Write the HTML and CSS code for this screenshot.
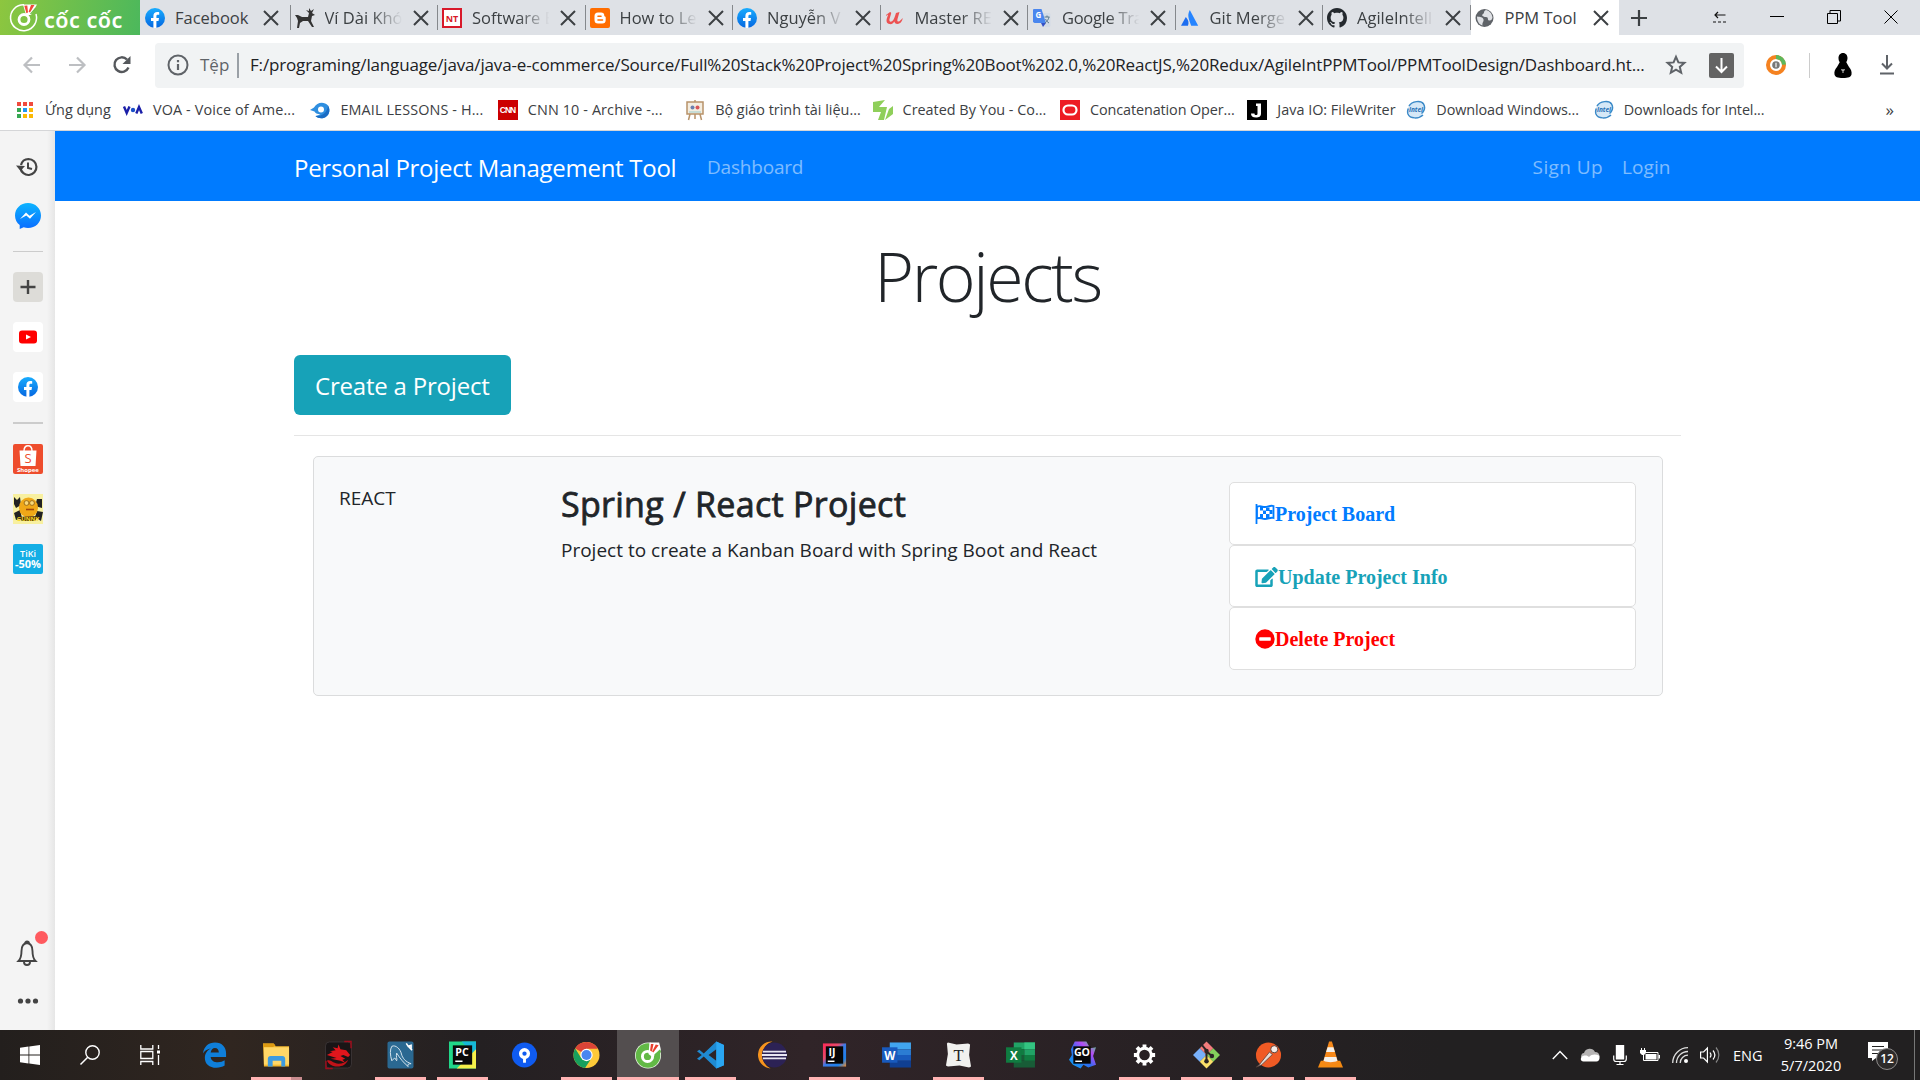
FILE: index.html
```html
<!DOCTYPE html>
<html lang="vi">
<head>
<meta charset="utf-8">
<title>PPM Tool</title>
<link rel="stylesheet" href="styles.css">
</head>
<body>
<svg class="defs" width="0" height="0">
  <defs>
    <linearGradient id="blue" x1="0" y1="0" x2="0" y2="1"><stop offset="0" stop-color="#18acfe"/><stop offset="1" stop-color="#0566e0"/></linearGradient>
    <linearGradient id="msg" x1="0" y1="0" x2="0" y2="1"><stop offset="0" stop-color="#0cb4ff"/><stop offset="1" stop-color="#0a6cff"/></linearGradient>
    <linearGradient id="ij" x1="0" y1="0" x2="1" y2="1"><stop offset="0" stop-color="#fe2857"/><stop offset=".35" stop-color="#ea4a6a"/><stop offset=".5" stop-color="#3a7be8"/><stop offset=".8" stop-color="#1c80ea"/><stop offset="1" stop-color="#f08a2a"/></linearGradient>
    <linearGradient id="go" x1="0" y1="1" x2="1" y2="0"><stop offset="0" stop-color="#0aa8f5"/><stop offset=".45" stop-color="#2e6cf0"/><stop offset=".7" stop-color="#b74af7"/><stop offset="1" stop-color="#3bea62"/></linearGradient>
    <symbol id="x" viewBox="0 0 16 16"><path d="M1 1l14 14M15 1L1 15" stroke="#3c4043" stroke-width="2" fill="none"/></symbol>
    <symbol id="fb" viewBox="0 0 20 20"><circle cx="10" cy="10" r="10" fill="url(#blue)"/><path d="M8.4 20v-7H6v-3h2.4V8c0-2.700 1.500-4 3.800-4 .9 0 1.700.1 2 .2v2.500h-1.400c-1.100 0-1.400.6-1.400 1.400V10H14l-.5 3h-2.100v7z" fill="#fff"/></symbol>
    <symbol id="intel" viewBox="0 0 20 20"><ellipse cx="10" cy="9.500" rx="8.300" ry="8" fill="#d5e8f7"/><path d="M3 6C6 1 15 0 17.500 4s0 8-2 9.500M17 15c-4 4-13 4-15-1-.7-2-.3-4 .3-5.500" fill="none" stroke="#3c8ac8" stroke-width="1.500"/><text x="10" y="12" text-anchor="middle" class="g-intel">intel</text></symbol>
  </defs>
</svg>

<header class="tabs">
  <div class="brand">
    <svg width="36" height="35" viewBox="0 0 36 35"><path d="M18 4.700A13 13 0 1030 14" fill="none" stroke="#fff" stroke-width="1.500"/><path d="M17 4.500h14l-6 10.500h-5z" fill="#fff"/><path d="M18.300 5.700l3-.2.700 7-1.600.8zM25 5l3.500 0-4.500 7.500-1.400-.8z" fill="#f04a3a"/><path d="M30.500 8l-5.500 6.500-1-.8 5-5.700z" fill="#6cbd45"/><circle cx="18" cy="19.500" r="5" fill="none" stroke="#fff" stroke-width="2.800"/></svg>
    <span class="brand-name">cốc cốc</span>
  </div>
  <nav class="tablist">
    <div class="tab"><svg class="ic"><use href="#fb"/></svg><span class="title">Facebook</span><svg class="x"><use href="#x"/></svg></div>
    <div class="tab"><svg class="ic" viewBox="0 0 20 20"><path d="M0 7h3l4 2h6l1-4-3-3 3 1V0l2 3 3-2-2 4 3 2-3 1-1 5 3 6h-2l-4-6H8l-3 2-1 5H2l1-7-1-3z" fill="#333"/></svg><span class="title">Ví Dài Khó</span><svg class="x"><use href="#x"/></svg></div>
    <div class="tab"><svg class="ic" viewBox="0 0 20 20"><path d="M1 1h18v18H1z" fill="#fff" stroke="#d8192a" stroke-width="2"/><text x="10" y="13.500" text-anchor="middle" class="g-nt">NT</text></svg><span class="title">Software E</span><svg class="x"><use href="#x"/></svg></div>
    <div class="tab"><svg class="ic" viewBox="0 0 20 20"><rect width="20" height="20" rx="2" fill="#ff6d00"/><path d="M8 4.500h3a3.300 3.300 0 013.300 3.300c0 1 1.400.6 1.400 1.700v2.500A3.500 3.500 0 0112.200 15.500H8A3.500 3.500 0 014.500 12V8A3.500 3.500 0 018 4.500z" fill="#fff"/><path d="M8 8.200h3M8 12h4.500" stroke="#ff6d00" stroke-width="1.600" stroke-linecap="round"/></svg><span class="title">How to Le</span><svg class="x"><use href="#x"/></svg></div>
    <div class="tab"><svg class="ic"><use href="#fb"/></svg><span class="title">Nguyễn V</span><svg class="x"><use href="#x"/></svg></div>
    <div class="tab"><svg class="ic" viewBox="0 0 20 20"><path d="M1 7l4-3c1 0 1.500 1 1 2L4.500 11c-.5 2 .5 3 2 2.500C9 12.500 10 8 11 5l3.500-1-2 7c-.5 2 0 2.500 1 2.500s3-2 4-3.500c.5 2-2 6-5 6-2 0-3-1-3-2.500-1.500 2-3 3-5 2.500C1.500 15.500 1 13 2 10l1-3c-.5-.5-1 .5-1.500 1z" fill="#ec5252"/></svg><span class="title">Master RE</span><svg class="x"><use href="#x"/></svg></div>
    <div class="tab"><svg class="ic" viewBox="0 0 20 20"><path d="M8 5h9.500l1 1v12l-1 1H13z" fill="#d3dbe6"/><path d="M1.500 1h8l4.500 14H2.500L1 14V1.500z" fill="#4a86ee"/><path d="M9 15h5l-3 4z" fill="#3551c5"/><text x="6.500" y="10" text-anchor="middle" class="g-g">G</text><path d="M12.500 9h5M15 7.500V9M13 15c2-1.500 3.500-3.500 4-6M13.500 11c1 2 2 3 3.500 4" stroke="#5b7a8e" fill="none"/></svg><span class="title snug">Google Tra</span><svg class="x"><use href="#x"/></svg></div>
    <div class="tab"><svg class="ic" viewBox="0 0 20 20"><path d="M5.800 9c2.800 3 3.200 5.500 2.200 8.800H1z" fill="#1d6df0"/><path d="M9.800 2l8.400 15.800h-7C9.500 12 6.500 8 9.800 2z" fill="#2684ff"/></svg><span class="title">Git Merge</span><svg class="x"><use href="#x"/></svg></div>
    <div class="tab"><svg class="ic" viewBox="0 0 16 16"><path fill="#24292e" d="M8 0C3.580 0 0 3.580 0 8c0 3.540 2.290 6.530 5.470 7.590.4.070.55-.17.55-.38 0-.19-.01-.82-.01-1.490-2.010.37-2.530-.49-2.690-.94-.09-.23-.48-.94-.82-1.130-.28-.15-.68-.52-.01-.53.63-.01 1.080.58 1.230.82.72 1.210 1.870.87 2.330.66.07-.52.28-.87.51-1.070-1.780-.2-3.640-.89-3.640-3.950 0-.87.31-1.590.82-2.150-.08-.2-.36-1.020.08-2.120 0 0 .67-.21 2.200.82.64-.18 1.320-.27 2-.27s1.360.09 2 .27c1.530-1.040 2.200-.82 2.200-.82.44 1.100.16 1.920.08 2.120.51.56.82 1.270.82 2.150 0 3.070-1.870 3.750-3.650 3.950.29.25.54.73.54 1.480 0 1.070-.01 1.930-.01 2.200 0 .21.15.46.55.38A8.010 8.010 0 0016 8c0-4.420-3.580-8-8-8z"/></svg><span class="title">AgileIntell</span><svg class="x"><use href="#x"/></svg></div>
    <div class="tab active"><svg class="ic" viewBox="0 0 20 20"><circle cx="9.500" cy="10" r="9" fill="#5f6368"/><path d="M2 8.500c3 .5 6 .5 6.500 3C9 14 7 14 7.500 17.500 4 16.500 2 13 2 8.500zM11 2c-3 1-1 3-3 4s0 3 3 3 1 3 3 3.500 3-1 3.500-3C17 6 15 3 11 2z" fill="#dfe1e5"/></svg><span class="title">PPM Tool</span><svg class="x"><use href="#x"/></svg></div>
  </nav>
  <svg class="newtab" width="16" height="16" viewBox="0 0 16 16"><path d="M8 0v16M0 8h16" stroke="#3c4043" stroke-width="2.200"/></svg>
  <div class="winctl">
    <svg width="14" height="14" viewBox="0 0 14 14"><path d="M1.500 5h11M5 2L2 5l3 3M0 12h3M5 12h3M10 12h3" stroke="#111" stroke-width="1.200" fill="none"/></svg>
    <svg width="14" height="14" viewBox="0 0 14 14"><path d="M0 6.500h14" stroke="#000"/></svg>
    <svg width="14" height="14" viewBox="0 0 14 14"><path d="M.5 3.500h10v10H.5zM3 3V.5h10.500V11H11" stroke="#000" fill="none"/></svg>
    <svg width="14" height="14" viewBox="0 0 14 14"><path d="M.5.5l13 13M13.500.5l-13 13" stroke="#000" fill="none"/></svg>
  </div>
</header>

<div class="toolbar">
  <div class="navbtns">
    <svg width="20" height="20" viewBox="0 0 20 20"><path d="M18 10H3M10 2.500L2.500 10l7.500 7.500" stroke="#bdbfc2" stroke-width="2.200" fill="none"/></svg>
    <svg width="20" height="20" viewBox="0 0 20 20"><path d="M2 10h15M10 2.500l7.500 7.500-7.500 7.500" stroke="#bdbfc2" stroke-width="2.200" fill="none"/></svg>
    <svg width="20" height="20" viewBox="0 0 20 20"><path d="M16.500 12.500a7.300 7.300 0 11-1.500-8" stroke="#55585c" stroke-width="2.400" fill="none"/><path d="M18.500 1v8h-8z" fill="#55585c"/></svg>
  </div>
  <div class="omnibox">
    <svg width="22" height="22" viewBox="0 0 22 22"><circle cx="11" cy="11" r="9.500" fill="none" stroke="#5f6368" stroke-width="2"/><path d="M11 10v6M11 6v2.200" stroke="#5f6368" stroke-width="2.200"/></svg>
    <span class="scheme">Tệp</span>
    <span class="url">F:/programing/language/java/java-e-commerce/Source/Full%20Stack%20Project%20Spring%20Boot%202.0,%20ReactJS,%20Redux/AgileIntPPMTool/PPMToolDesign/Dashboard.ht...</span>
    <svg class="star" width="20" height="20" viewBox="0 0 20 20"><path d="M10 1.800l2.400 5.600 6 .5-4.600 4 1.400 5.900L10 14.700l-5.200 3.100 1.400-5.900-4.600-4 6-.5z" fill="none" stroke="#5f6368" stroke-width="2"/></svg>
    <svg width="25" height="25" viewBox="0 0 25 25"><rect width="25" height="25" rx="2" fill="#636363"/><path d="M12.500 5v14M7 13.500l5.500 5.500 5.500-5.500" stroke="#fff" stroke-width="2" fill="none"/></svg>
  </div>
  <svg class="ext" width="20" height="20" viewBox="0 0 20 20"><circle cx="10" cy="10" r="8" fill="none" stroke="#f58220" stroke-width="4"/><path d="M10 2a8 8 0 018 7.500" fill="none" stroke="#5cb85c" stroke-width="4"/><circle cx="10" cy="10" r="3.800" fill="#777"/><path d="M10 7.800v4.400" stroke="#ddd" stroke-width="1.500"/></svg>
  <i class="vr"></i>
  <svg class="avatar" width="18" height="25" viewBox="0 0 18 25"><path d="M9 0c3 0 4.500 2.500 4.500 5 0 2-.7 3-1.200 4.200L15 14c2 2 3 5 2.500 7.500-.5 2.500-3 3.500-8.500 3.500S1 24 .5 21.500C0 19 1 16 3 14l2.700-4.800C5 8 4.500 7 4.500 5 4.500 2.500 6 0 9 0z"/><path d="M7 16.500c1 1 3 1 4 0M9 16v4" stroke="#ccc" fill="none"/></svg>
  <svg width="14" height="20" viewBox="0 0 14 20"><path d="M7 0v13M2 8.500l5 5 5-5M0 18.500h14" stroke="#5f6368" stroke-width="2" fill="none"/></svg>
</div>

<div class="bookmarks">
  <span class="bm apps"><svg viewBox="0 0 16 16"><path d="M0 0h4v4H0zM6 0h4v4H6zM12 0h4v4h-4z" fill="#f04a3e"/><path d="M0 6h4v4H0z" fill="#36a852"/><path d="M6 6h4v4H6z" fill="#2196f3"/><path d="M12 6h4v4h-4z" fill="#fbb905"/><path d="M0 12h4v4H0z" fill="#36a852"/><path d="M6 12h4v4H6zM12 12h4v4h-4z" fill="#fbb905"/></svg><span>Ứng dụng</span></span>
  <span class="bm"><svg viewBox="0 0 20 20"><path d="M1 6.500l2.700 6.500L6.500 6.500M13.300 13.500L16 7l2.800 6.500" stroke="#1b1fa8" stroke-width="2.400" fill="none"/><circle cx="10" cy="10" r="2.200" fill="#1b50c8"/></svg><span class="loose">VOA - Voice of Ame...</span></span>
  <span class="bm"><svg viewBox="0 0 20 20"><path d="M0 10l4-2.500C7 2 14 1 18 5.500c3 5 1 11-4.500 12.500-3 .7-6 0-8-2l5-1.500C7 14 5 13 4.500 11.500z" fill="#2f8fe0"/><path d="M18 5.500c3 5 1 11-4.500 12.500-3 .7-6 0-8-2 6 .5 12-3 12.500-10.500z" fill="#1a6cc4"/><circle cx="11" cy="9.500" r="3" fill="#fff"/></svg><span class="loose">EMAIL LESSONS - H...</span></span>
  <span class="bm"><svg viewBox="0 0 20 20"><path d="M0 0h20v20H0z" fill="#c00"/><text x="9.500" y="13.300" text-anchor="middle" class="g-cnn">CNN</text></svg><span class="loose">CNN 10 - Archive -...</span></span>
  <span class="bm"><svg viewBox="0 0 20 20"><path d="M2 2h16v12H2z" fill="#f4ede0" stroke="#b8936a" stroke-width="1.500"/><path d="M5 14l-1.500 6M15 14l1.500 6M10 0v2M10 14v5" stroke="#b8936a" stroke-width="1.500"/><circle cx="7.500" cy="7.500" r="2" fill="#6b7fae"/><circle cx="12.500" cy="7.500" r="2" fill="#d8565a"/><path d="M4 12h12" stroke="#9cc" /></svg><span>Bộ giáo trình tài liệu...</span></span>
  <span class="bm"><svg viewBox="0 0 20 20"><path d="M0 2l12-2-6 7h8l-3 13H5l3-8H0zM20 6v8l-8 6 4-11z" fill="#8fcf5a"/></svg><span>Created By You - Co...</span></span>
  <span class="bm"><svg viewBox="0 0 20 20"><path d="M0 0h20v20H0z" fill="#ed1c24"/><rect x="3.500" y="5.500" width="13" height="9" rx="4.500" fill="none" stroke="#fff" stroke-width="2.200"/></svg><span class="tight">Concatenation Oper...</span></span>
  <span class="bm short"><svg viewBox="0 0 20 20"><path d="M0 0h20v20H0z"/><path d="M9 3.500h5v10c0 3-2 4-5 4-3.500 0-5-1.500-5-4h3.500c0 1 .5 1.500 1.500 1.500s1.500-.5 1.500-1.500V6H9z" fill="#fff"/></svg><span>Java IO: FileWriter</span></span>
  <span class="bm"><svg><use href="#intel"/></svg><span class="tight">Download Windows...</span></span>
  <span class="bm"><svg><use href="#intel"/></svg><span class="tight">Downloads for Intel...</span></span>
  <span class="more">»</span>
</div>

<div class="body">
  <aside class="side">
    <svg class="hist" width="22" height="20" viewBox="0 0 22 20"><path d="M4.500 11a8 8 0 108-9 8 8 0 00-7.500 6" fill="none" stroke="#444" stroke-width="2.200"/><path d="M0 8.500l9 .5-4.500 5z" fill="#444"/><path d="M12 5.500V11l4 1" fill="none" stroke="#444" stroke-width="2"/></svg>
    <svg class="mess" width="26" height="26" viewBox="0 0 26 26"><path d="M13 0C5.500 0 0 5.500 0 12.500c0 4 1.800 7.300 4.700 9.500V26l4-1.700c1.300.4 2.800.7 4.300.7 7.500 0 13-5.500 13-12.500S20.500 0 13 0z" fill="url(#msg)"/><path d="M5 16l6-6.500 3.500 3.300L21 9l-6 6.800-3.700-3.300z" fill="#fff"/></svg>
    <hr>
    <svg class="sq" viewBox="0 0 30 30"><rect width="30" height="30" rx="4" fill="#dddcd8"/><path d="M15 8v14M7.500 15h15" stroke="#444" stroke-width="2.400"/></svg>
    <svg class="sq" viewBox="0 0 30 30"><rect width="30" height="30" rx="4" fill="#fff"/><rect x="6" y="8.500" width="18" height="13" rx="3" fill="#f00"/><path d="M13 12.500l5 2.500-5 2.500z" fill="#fff"/></svg>
    <svg class="sq" viewBox="0 0 30 30"><rect width="30" height="30" rx="4" fill="#fff"/><use href="#fb" x="5" y="5" width="20" height="20"/></svg>
    <hr class="thick">
    <svg class="sq" viewBox="0 0 30 30"><rect width="30" height="30" rx="2" fill="#ee4d2d"/><path d="M6.500 6.500h17l-1 15.500h-15z" fill="#fff"/><path d="M11 7c0-7 8-7 8 0" fill="none" stroke="#fff" stroke-width="1.400"/><text x="15" y="19" text-anchor="middle" class="g-s">S</text><text x="15" y="28" text-anchor="middle" class="g-shopee">Shopee</text></svg>
    <svg class="sq" viewBox="0 0 30 30"><path d="M0 0h30v30H0z" fill="#f8f0a0"/><path d="M1 3l3 3 3-3 1 8-5 3-2-4zM29 5l-5 0-2 7 7 2zM1 19l6-3 2 8-6 2zM30 18l-6-1-2 6 6 4z" fill="#222"/><ellipse cx="15.500" cy="13.500" rx="9.500" ry="10" fill="#f0a818"/><circle cx="13.500" cy="9" r="2.400" fill="#f8d878" stroke="#8a5a10" stroke-width=".8"/><circle cx="19" cy="9" r="2.400" fill="#f8d878" stroke="#8a5a10" stroke-width=".8"/><path d="M13 15.500h8" stroke="#a0480c" stroke-width="1.600"/><path d="M5 23l20-1-3 5H9z" fill="#4a3010"/><text x="15" y="27" text-anchor="middle" class="g-gunny">GUNNY</text></svg>
    <svg class="sq" viewBox="0 0 30 30"><rect width="30" height="30" rx="2" fill="#14aee5"/><text x="15" y="12.500" text-anchor="middle" class="g-tiki">TiKi</text><text x="15" y="24" text-anchor="middle" class="g-off">-50%</text></svg>
    <div class="bell"><svg width="20" height="26" viewBox="0 0 20 26"><path d="M8 3.500a2 2 0 114 0M10 3c-4 .5-5.500 4-5.500 8 0 5-1 8-3 10h17c-2-2-3-5-3-10 0-4-1.500-7.500-5.500-8zM7 22c0 4 6 4 6 0" fill="none" stroke="#444" stroke-width="1.900"/></svg><i></i></div>
    <svg width="22" height="6" viewBox="0 0 22 6"><circle cx="3.500" cy="3" r="2.600" fill="#444"/><circle cx="11" cy="3" r="2.600" fill="#444"/><circle cx="18.500" cy="3" r="2.600" fill="#444"/></svg>
  </aside>

  <main class="page">
    <nav class="navbar"><div class="container">
      <a class="navbar-brand">Personal Project Management Tool</a>
      <a class="link dash">Dashboard</a>
      <a class="link signup">Sign Up</a>
      <a class="link">Login</a>
    </div></nav>
    <div class="container">
      <h1>Projects</h1>
      <a class="btn">Create a Project</a>
      <hr class="rule">
      <section class="card">
        <span class="ident">REACT</span>
        <div class="info">
          <h3>Spring / React Project</h3>
          <p>Project to create a Kanban Board with Spring Boot and React</p>
        </div>
        <ul class="actions">
          <li class="board"><svg width="20" height="20" viewBox="0 0 20 20"><path d="M1.500 0v20M2 3c3-2 5 0 8 0s5-2 8.500-1v12c-3-1-5 1-8.500 1s-5-2-8-.5z" fill="none" stroke="currentColor" stroke-width="1.800"/><path d="M5 3h3v3.500H5zM11 3.500h3.500V7H11zM8 6.500h3V10H8zM14.500 6h3v4h-3zM5 10h3v4H5zM11 10h3.500v4H11z" fill="currentColor"/></svg><span>Project Board</span></li>
          <li class="update"><svg width="23" height="20" viewBox="0 0 576 512"><path fill="currentColor" d="M402.600 83.200l90.200 90.200c3.800 3.800 3.800 10 0 13.800L274.400 405.600l-92.800 10.300c-12.400 1.400-22.900-9.100-21.500-21.500l10.300-92.800L388.800 83.200c3.800-3.800 10-3.800 13.800 0zm162-22.900l-48.800-48.800c-15.200-15.200-39.900-15.200-55.200 0l-35.400 35.400c-3.800 3.800-3.800 10 0 13.800l90.200 90.200c3.800 3.800 10 3.800 13.800 0l35.400-35.400c15.200-15.300 15.200-40 0-55.200zM384 346.200V448H64V128h229.800c3.200 0 6.200-1.300 8.500-3.500l40-40c7.600-7.600 2.200-20.500-8.500-20.500H48C21.500 64 0 85.500 0 112v352c0 26.500 21.500 48 48 48h352c26.500 0 48-21.500 48-48V306.200c0-10.700-12.900-16-20.500-8.500l-40 40c-2.200 2.300-3.500 5.300-3.500 8.500z"/></svg><span>Update Project Info</span></li>
          <li class="delete"><svg width="20" height="20" viewBox="0 0 20 20"><circle cx="10" cy="10" r="9.700" fill="currentColor"/><rect x="4.200" y="8.300" width="11.600" height="3.400" rx=".6" fill="#fff"/></svg><span>Delete Project</span></li>
        </ul>
      </section>
    </div>
  </main>
</div>

<footer class="taskbar">
  <div class="sys">
    <svg width="20" height="20" viewBox="0 0 20 20"><path d="M0 2.800L8.500 1.500v8H0zM9.300 1.400L20 0v9.500H9.300zM0 10.400h8.500v8L0 17.200zM9.300 10.400H20V20L9.300 18.500z" fill="#fff"/></svg>
    <svg width="20" height="20" viewBox="0 0 20 20"><circle cx="12.500" cy="7.500" r="6.700" fill="none" stroke="#fff" stroke-width="1.400"/><path d="M7.700 12.300L.5 19.500" stroke="#fff" stroke-width="1.500"/></svg>
    <svg width="20" height="20" viewBox="0 0 20 20"><path d="M.8 0v4h12V0M.8 20v-3.500h12V20M.8 6.500h12v7H.8zM18.500 0v4M18.500 10v10" fill="none" stroke="#fff" stroke-width="1.300"/><path d="M17 5.500h3v3h-3z" fill="#fff"/></svg>
  </div>
  <div class="apps-row">
    <span class="app"><svg viewBox="0 0 28 28"><path d="M2 12.500C3 5 8 1 14.500 1 22 1 26 6 26 12v4H10c.5 4 3.500 5.500 7.500 5.500 3 0 5-.8 7-2V25c-2.500 1.500-5 2.200-8.500 2.200C8.500 27.200 4 23 4 17c0-4.500 2.500-8 6.500-10C6 8 3.500 10 2 12.500zM10 11.500h8.500c0-3-1.500-4.800-4-4.800s-4 1.800-4.500 4.800z" fill="#0f7fda"/></svg></span>
    <span class="app on multi"><svg viewBox="0 0 28 28"><path d="M0 2h11l2 3h14v21H1z" fill="#f5b92e"/><path d="M0 2h11l2 2-3 2H0z" fill="#dc9a12"/><path d="M1 6h26v18H1z" fill="#ffd767"/><path d="M5 26v-8c0-2 1-3 3-3h12c2 0 3 1 3 3v8h-4v-6H10v6z" fill="#3d9be0"/></svg></span>
    <span class="app"><svg viewBox="0 0 28 28"><rect x=".5" y=".5" width="27" height="27" rx="4" fill="#191516" stroke="#3a3435"/><path d="M20 0h7v7M1 20v8h7" stroke="#a10c1c" fill="none" stroke-width="1.500"/><path d="M2 14l6-3-3-1 6-1-3-3 5 1 1-4 2 5 6 1 4 5-2 2-5-2-3 1 5 3-3 1 3 3-5-2-10-2 6-1z" fill="#e0161c"/><path d="M2 20c4-2 6 3 12 3 4 0 7-1 10-4-2 5-6 7-11 7S4 24 2 20z" fill="#c01218"/></svg></span>
    <span class="app on"><svg viewBox="0 0 28 28"><rect x=".5" y="0" width="27" height="28" rx="2" fill="#2a6891"/><path d="M5 20C3 14 3 8 5 5c4-2 9 3 10 8 1 4 4 8 10 10-3 0-4 1-3 3-4-3-9-9-12-14-1 4 1 6 0 8l-2-3z" fill="#34739b" stroke="#d9e6ee"/><path d="M20 2l2 3 3-1v4M22 5l4 4" stroke="#fff" stroke-width="1.600" fill="none"/></svg></span>
    <span class="app on"><svg viewBox="0 0 28 28"><path d="M0 0h28v28H0z" fill="#21d789"/><path d="M13 0h15v16z" fill="#16b8d8"/><path d="M28 8v20H8z" fill="#f5f04a"/><path d="M4 4h20v20H4z" fill="#0a0a0a"/><text x="13.500" y="15" text-anchor="middle" class="g-jb">PC</text><path d="M6.500 20.500h7.500" stroke="#fff" stroke-width="1.600"/></svg></span>
    <span class="app"><svg viewBox="0 0 28 28"><circle cx="14" cy="14" r="13" fill="#0f5bf0"/><circle cx="14" cy="12.500" r="4" fill="none" stroke="#fff" stroke-width="3.500"/><path d="M12.500 16h3v6h-3z" fill="#fff"/></svg></span>
    <span class="app on"><svg viewBox="0 0 28 28"><circle cx="14" cy="14" r="13.500" fill="#fdc938"/><path d="M14 14L2.300 7.200A13.500 13.500 0 0125.700 7.500H14z" fill="#db4437"/><path d="M2.300 7.200A13.500 13.500 0 0012.500 27.400L19 17.500 8.500 17z" fill="#17a05d"/><circle cx="14" cy="14" r="6.400" fill="#fff"/><circle cx="14" cy="14" r="5.200" fill="#4a86f0"/></svg></span>
    <span class="app on current"><svg viewBox="0 0 28 28"><circle cx="13.500" cy="14.500" r="13.500" fill="#e9f3e4"/><circle cx="13.500" cy="14.500" r="12.700" fill="#62b946"/><path d="M15 1h10l2 8-9 7-4-3z" fill="#fff"/><path d="M16.500 2.500h2.700L17.500 11l-2-.5zM21.500 3l3 1-5.500 7.500-1.300-1z" fill="#e8402e"/><path d="M26 8l1 3-6 4-1-1.500z" fill="#62b946"/><circle cx="13" cy="15.500" r="5.300" fill="none" stroke="#fff" stroke-width="3"/></svg></span>
    <span class="app on"><svg viewBox="0 0 28 28"><path d="M20 0l8 3.500v21L20 28 7 15.500l-4.500 4L0 18l5-4-5-4 2.500-1.500 4.500 4zM20 8l-8 6 8 6z" fill="#1f8ad2"/><path d="M20 0l8 3.500v21L20 28z" fill="#2aa6f2"/></svg></span>
    <span class="app"><svg viewBox="0 0 28 28"><path d="M14 0A14 14 0 0012 28 15 15 0 0114 0z" fill="#f7941e"/><circle cx="16" cy="14" r="13" fill="#2c2255"/><path d="M4 10.500h24M3 14h26M4 17.500h24" stroke="#e8e6f2" stroke-width="2"/></svg></span>
    <span class="app on"><svg viewBox="0 0 28 28"><path d="M2 2h24v24H2z" fill="url(#ij)"/><path d="M5 5h18v18H5z" fill="#060606"/><text x="11.500" y="15" text-anchor="middle" class="g-jb">IJ</text><path d="M7 20.500h7" stroke="#fff" stroke-width="1.500"/></svg></span>
    <span class="app"><svg viewBox="0 0 28 28"><path d="M7 1h22v7H7z" fill="#41a5ee"/><path d="M7 8h22v6H7z" fill="#2b7cd3"/><path d="M7 14h22v6H7z" fill="#185abd"/><path d="M7 20h22v7H7z" fill="#103f91"/><path d="M-1 6h16v16H-1z" fill="#185abd"/><text x="7" y="18.700" text-anchor="middle" class="g-off2">W</text></svg></span>
    <span class="app on"><svg viewBox="0 0 28 28"><path d="M3 1l9 2 12-1 2 1-1 11 2 12-2 1-10-2-12 1-2-1 2-12-1-11z" fill="#f1f1ef"/><text x="14" y="20" text-anchor="middle" class="g-t">T</text></svg></span>
    <span class="app"><svg viewBox="0 0 28 28"><path d="M7 1h22v7H7z" fill="#21a366"/><path d="M18 1h11v7H18z" fill="#33c481"/><path d="M7 8h11v6H7z" fill="#107c41"/><path d="M18 8h11v6H18z" fill="#21a366"/><path d="M7 14h22v6H7z" fill="#185c37"/><path d="M18 14h11v6H18z" fill="#107c41"/><path d="M7 20h22v7H7z" fill="#185c37"/><path d="M-1 6h16v16H-1z" fill="#107c41"/><text x="7" y="18.700" text-anchor="middle" class="g-off2">X</text></svg></span>
    <span class="app"><svg viewBox="0 0 28 28"><path d="M6 0l12 0 4 7 6-1-3 9 3 9-8 3-5-3-3 4-8-4-4-5 3-5-1-6z" fill="url(#go)"/><path d="M4.500 5h18v18h-18z" fill="#080808"/><text x="13.500" y="15" text-anchor="middle" class="g-jb">GO</text><path d="M6.500 20.500h7" stroke="#fff" stroke-width="1.500"/></svg></span>
    <span class="app on"><svg viewBox="0 0 28 28"><circle cx="14" cy="14" r="7" fill="none" stroke="#fff" stroke-width="3"/><g stroke="#fff" stroke-width="4"><path d="M14 3v4M14 21v4M3 14h4M21 14h4M6.200 6.200L9 9M19 19l2.800 2.800M21.800 6.200L19 9M9 19l-2.800 2.800"/></g></svg></span>
    <span class="app on"><svg viewBox="0 0 30 30"><path d="M15 0l7.500 7.500-7.500 7.500-7.500-7.500z" fill="#f37c7c"/><path d="M7.500 7.500L15 15l-7.500 7.500L0 15z" fill="#78b0fa"/><path d="M22.500 7.500L30 15l-7.500 7.500L15 15z" fill="#83d05c"/><path d="M15 15l7.500 7.500L15 30l-7.500-7.500z" fill="#fbe06a"/><path d="M10 4l5 6v12M15 11l6 5" stroke="#2a2425" stroke-width="2.200" fill="none"/><circle cx="15" cy="10.500" r="2.500" fill="#2a2425"/><circle cx="21" cy="16" r="2.500" fill="#2a2425"/><circle cx="15" cy="22" r="2.500" fill="#2a2425"/></svg></span>
    <span class="app on"><svg viewBox="0 0 28 28"><circle cx="14" cy="14" r="13" fill="#f05a24"/><path d="M1.500 26.500l3-2.500L15 11l3 2.500L7 24z" fill="#e8dcd6" stroke="#5a4038" stroke-width=".8"/><circle cx="20" cy="8" r="3.700" fill="#f4ece8" stroke="#5a4038"/></svg></span>
    <span class="app on"><svg viewBox="0 0 28 28"><path d="M4 20h20l3 7H1z" fill="#f58a12"/><path d="M12.500 0h3l6.500 22c-4 3-12 3-16 0z" fill="#f5881a"/><path d="M11 6h6l1.600 5H9.400zM8 16h12l1.200 4c-4 2-10 2-14.400 0z" fill="#f3f1ee"/></svg></span>
  </div>
  <div class="tray">
    <svg height="10" viewBox="0 0 16 10"><path d="M.8 9L8 1.500 15.200 9" fill="none" stroke="#fff" stroke-width="1.400"/></svg>
    <svg height="14" viewBox="0 0 20 14"><path d="M4 5a6 6 0 0111-1c3 0 4.500 2 4.500 4.500L8 12 1 9c0-2 1-4 3-4z" fill="#b5b3b3"/><path d="M3 8c3-1 5 0 6 1 3-3 6-3 10-1.500 1 1 1 6-2.500 6h-13C0 13.500 0 9 3 8z" fill="#fff"/></svg>
    <svg height="20" viewBox="0 0 14 20"><rect x="2.800" y="0" width="8.400" height="14.500" fill="#fff"/><path d="M.7 10.500V14c0 2 1 2.500 2.500 2.500h7.600c1.500 0 2.500-.5 2.500-2.500v-3.500M7 16.500v3M3.500 19.500h7" fill="none" stroke="#fff" stroke-width="1.200"/></svg>
    <svg height="14" viewBox="0 0 20 14"><path d="M3.500 4.500h14.500v8H3.500z" fill="none" stroke="#fff"/><path d="M5.500 6h11v5.500h-11zM18.500 7H20v3.500h-1.500zM0 2h6v3L4 7H2L0 5zM1 0h1v2H1zM4 0h1v2H4z" fill="#fff"/></svg>
    <svg height="16" viewBox="0 0 16 16"><path d="M.7 16A15.300 15.300 0 0116 .7M4.500 16A11.500 11.500 0 0116 4.500M8.200 16A7.800 7.800 0 0116 8.200" fill="none" stroke="#ddd" stroke-width="1.300"/><circle cx="14" cy="14" r="2" fill="#fff"/></svg>
    <svg height="18" viewBox="0 0 20 18"><path d="M.6 6h3L7.400 2v14L3.600 12h-3z" fill="none" stroke="#fff" stroke-width="1.200"/><path d="M10 6.500c1.200 1.500 1.200 3.500 0 5M13 4.500c2.500 3 2.500 6 0 9" fill="none" stroke="#fff" stroke-width="1.200"/><path d="M16 1.500c3.800 4.500 3.800 10.500 0 15" fill="none" stroke="#888" stroke-width="1.200"/></svg>
    <span class="lang">ENG</span>
    <span class="clock"><span>9:46 PM</span><span>5/7/2020</span></span>
    <span class="note"><svg width="20" height="19" viewBox="0 0 20 19"><path d="M0 0h20v16H8l-4 3v-3H0z" fill="#fff"/><path d="M4 4.500h12M4 8h12M4 11.500h7" stroke="#222" stroke-width="1.200"/></svg><b>12</b></span>
    <i class="peek"></i>
  </div>
</footer>
</body>
</html>
```
FILE: styles.css
```css
* { box-sizing: border-box; }
body { margin: 0; width: 1920px; height: 1080px; overflow: hidden; background: #fff; color: #212529; font-family: "Open Sans", "Noto Sans", sans-serif; display: flex; flex-direction: column; }
svg { display: block; flex: none; overflow: visible; }
.defs { position: absolute; }
a { text-decoration: none; }

/* tab strip */
.tabs { height: 35px; flex: none; background: #dee1e6; display: flex; align-items: center; }
.brand { width: 140px; height: 35px; background: linear-gradient(100deg, #8dc63f, #4cb85c); display: flex; align-items: center; padding-left: 6px; margin-right: 3px; }
.brand-name { color: #fff; font: 600 21.5px/35px "Noto Sans", sans-serif; margin-left: 2px; padding-top: 3px; white-space: nowrap; letter-spacing: .5px; }
.tablist { display: flex; height: 35px; }
.tab { width: 147.5px; height: 35px; display: flex; align-items: center; padding-left: 4px; border-right: 1px solid; border-image: linear-gradient(#dee1e6 15%, #85888c 15%, #85888c 85%, #dee1e6 85%) 1; }
.tab:first-child { padding-left: 2px; }
.tab.active { background: #fff; border: 0; width: 148px; }
.tab .ic { width: 20px; height: 20px; }
.tab .title { width: 79px; margin-left: 10px; white-space: nowrap; font-size: 16.5px; line-height: 35px; color: #3c4043; -webkit-mask-image: linear-gradient(90deg, #000 58%, transparent 98%); mask-image: linear-gradient(90deg, #000 58%, transparent 98%); }
.tab .snug { letter-spacing: -.3px; }
.tab:first-child .title, .tab.active .title { -webkit-mask-image: none; mask-image: none; }
.tab .x { width: 16px; height: 16px; margin-left: 9px; }
.newtab { margin-left: 12px; }
.winctl { margin-left: auto; display: flex; gap: 43px; padding-right: 22px; margin-top: -2px; }
.winctl svg:first-child { margin-right: -13px; margin-left: 0; transform: none; }
.winctl svg:nth-child(2) { margin-left: 13px; }

/* address bar */
.toolbar { height: 59px; flex: none; display: flex; align-items: center; padding: 1px 26px 0 22px; }
.navbtns { display: flex; gap: 25px; width: 133px; flex: none; }
.omnibox { width: 1589px; flex: none; height: 45px; background: #f1f3f4; border-radius: 4px; display: flex; align-items: center; padding: 0 10px 0 12px; font-size: 17px; white-space: nowrap; }
.scheme { width: 37px; margin-left: 11px; color: #5f6368; line-height: 24px; }
.url { border-left: 2px solid #9aa0a6; height: 25px; line-height: 23px; padding-left: 11px; width: 1408px; color: #202124; letter-spacing: -.155px; }
.star { margin: 0 23px 0 auto; }
.ext { margin-left: 22px; }
.vr { width: 1px; height: 25px; background: #ccc; margin: 0 24px 0 23px; }
.avatar { margin-right: 28px; }

/* bookmarks */
.bookmarks { height: 37px; flex: none; display: flex; align-items: center; padding: 0 26px 5px 17px; border-bottom: 1px solid #d5d6d8; font-size: 14.4px; color: #3c4043; white-space: nowrap; }
.bm { width: 187.4px; display: flex; align-items: center; gap: 10px; }
.bm svg { width: 20px; height: 20px; }
.bm.apps { width: 106px; gap: 12px; }
.bm.apps svg { width: 16px; height: 16px; }
.bm.short { width: 159px; }
.tight { letter-spacing: -.1px; }
.loose { letter-spacing: .12px; }
.more { margin-left: auto; font-size: 17px; }

/* browser sidebar */
.body { flex: 1; display: flex; min-height: 0; }
.side { width: 55px; background: linear-gradient(90deg, #f4f4f4 85%, #e6e6e6); display: flex; flex-direction: column; align-items: center; padding: 26px 0 26px; }
.side hr { width: 30px; height: 1px; background: #ccc; border: 0; margin: 22px 0 20px; flex: none; }
.side hr.thick { height: 2px; margin: 0 0 20px; }
.hist { margin-right: 2px; }
.mess { margin-top: 26px; }
.sq { width: 30px; height: 30px; margin-bottom: 20px; }
.bell { margin: auto 1px 32px 0; position: relative; }
.bell i { position: absolute; left: 18px; top: -9px; width: 13px; height: 13px; border-radius: 50%; background: #ff5a5f; }

/* page */
.page { flex: 1; }
.container { width: 1387px; margin: 0 auto; }
.navbar { height: 70px; background: #007bff; }
.navbar .container { display: flex; align-items: center; height: 70px; padding-top: 2px; white-space: nowrap; }
.navbar-brand { color: #fff; font-size: 24px; width: 413px; letter-spacing: -.28px; }
.link { color: rgba(255,255,255,.5); font-size: 19px; }
.dash { margin-right: auto; letter-spacing: -.2px; }
.signup { margin-right: 19px; letter-spacing: .4px; }
.link:last-child { width: 59px; letter-spacing: .1px; }
h1 { margin: 29px 0 0; font-size: 68px; font-weight: 300; line-height: 92px; text-align: center; letter-spacing: -2.4px; }
.btn { display: flex; width: 217px; height: 60px; margin-top: 33px; border-radius: 6px; background: #17a2b8; color: #fff; font-size: 24px; line-height: 61px; padding-left: 21px; white-space: nowrap; letter-spacing: -.2px; }
.rule { margin: 20px 0 0; border: 0; height: 1px; background: #e5e5e5; }
.card { margin: 20px 18px 0 19px; height: 240px; background: #f8f9fa; border: 1px solid #dbdcdd; border-radius: 5px; display: flex; padding: 25px 25px; }
.ident { width: 223px; font-size: 19px; line-height: 32px; }
.info { width: 667px; white-space: nowrap; }
h3 { margin: 1px 0 0 -1px; font-size: 34px; font-weight: 400; line-height: 42px; letter-spacing: .3px; -webkit-text-stroke: .8px currentColor; }
p { margin: 10px 0 0 -1px; font-size: 19px; line-height: 30px; }
.actions { list-style: none; margin: 0; padding: 0; width: 407px; font: 700 20px/30px "Liberation Serif", serif; }
.actions li { height: 63px; border: 1px solid #dfdfdf; border-radius: 5px; background: #fff; display: flex; align-items: center; padding-left: 25px; }
.actions .update { height: 62px; padding-top: 2px; }
.actions .board { padding-top: 1px; }
.board { color: #007bff; }
.update { color: #17a2b8; }
.delete { color: red; }

/* taskbar */
.taskbar { height: 50px; flex: none; background: linear-gradient(90deg, #231f1d 0%, #302620 12%, #242022 25%, #302428 42%, #282124 60%, #222021 75%, #222021); display: flex; align-items: stretch; color: #fff; }
.sys { display: flex; gap: 40px; align-items: center; padding-left: 20px; width: 183px; }
.apps-row { display: flex; }
.app { width: 62px; display: flex; align-items: center; justify-content: center; padding: 0 5.5px; }
.app svg { width: 27px; height: 28px; }
.app.on { background: linear-gradient(#ffb3b3, #ffb3b3) center bottom / 51px 3px no-repeat; }
.app.multi { background: linear-gradient(90deg, #ffb3b3 79%, #c98c8f 79%) center bottom / 51px 3px no-repeat; }
.app.current { background: linear-gradient(#ffb3b3, #ffb3b3) center bottom / 100% 3px no-repeat, #534e4f; }
.tray { margin-left: auto; display: flex; align-items: center; font-size: 14.5px; white-space: nowrap; }
.tray > svg { width: 30px; }
.lang { margin-left: 8px; width: 48px; }
.clock { width: 60px; display: flex; flex-direction: column; align-items: center; line-height: 22px; margin-right: 27px; }
.note { position: relative; width: 46px; height: 26px; }
.note b { position: absolute; left: 8px; top: 6px; width: 22px; height: 22px; border: 1px solid #8d8b8b; border-radius: 50%; background: #2d2b2b; font-size: 12px; line-height: 20px; text-align: center; font-weight: 600; }
.peek { width: 6px; height: 50px; border-left: 1px solid #777; }

/* lettering inside icons */
.g-intel { font: italic 700 6.500px "Open Sans", sans-serif; fill: #1f6fb5; }
.g-nt { font: 700 9px "Open Sans", sans-serif; fill: #d8192a; }
.g-g { font: 700 8px "Open Sans", sans-serif; fill: #fff; }
.g-cnn { font: 700 8.500px "Liberation Sans", sans-serif; fill: #fff; letter-spacing: -1px; }
.g-s { font: 13px "Open Sans", sans-serif; fill: #ee4d2d; }
.g-shopee { font: 700 6px "Open Sans", sans-serif; fill: #fff; }
.g-gunny { font: 700 6px "Open Sans", sans-serif; fill: #f7d51e; }
.g-tiki { font: 600 9px "Open Sans", sans-serif; fill: #fff; }
.g-off { font: 700 11px "Open Sans", sans-serif; fill: #fff; }
.g-jb { font: 700 11px "Open Sans", sans-serif; fill: #fff; }
.g-off2 { font: 700 12px "Open Sans", sans-serif; fill: #fff; }
.g-t { font: 17px "Liberation Serif", serif; fill: #222; }
```
